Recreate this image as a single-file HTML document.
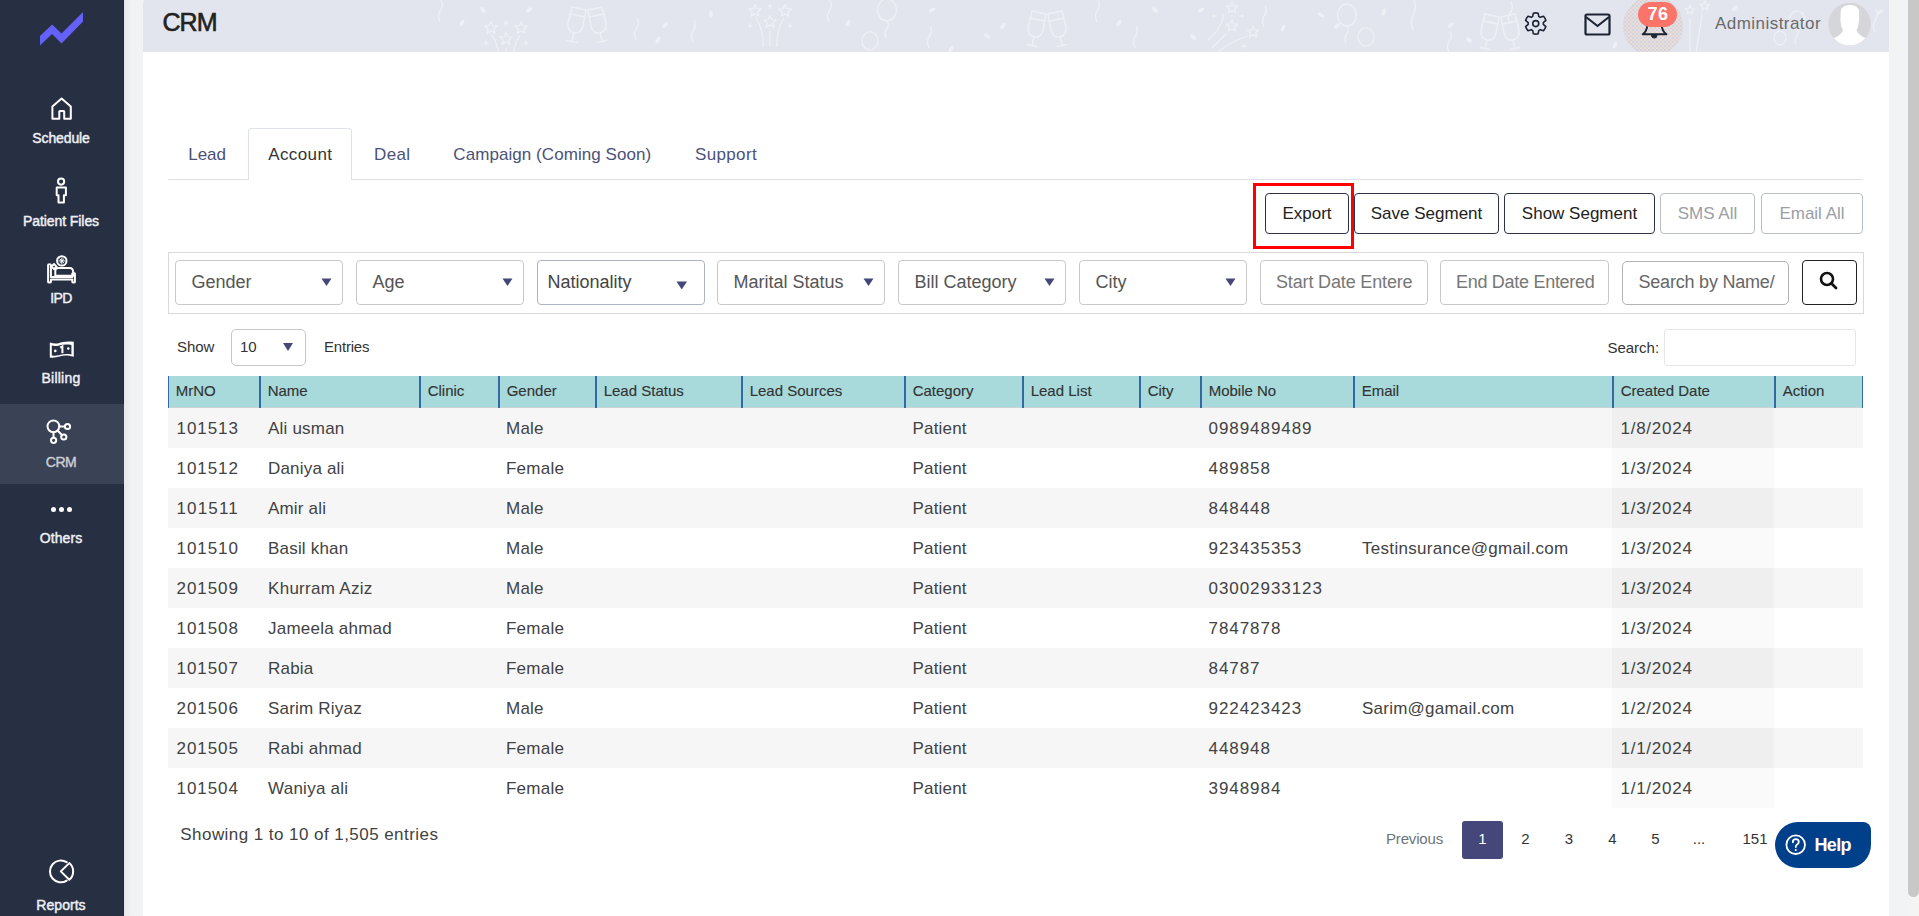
<!DOCTYPE html>
<html><head><meta charset="utf-8"><title>CRM</title>
<style>
html,body{margin:0;padding:0;}
body{width:1919px;height:916px;overflow:hidden;position:relative;background:#f1f2f4;font-family:"Liberation Sans",sans-serif;}
div,span,svg{position:absolute;box-sizing:border-box;}
.t{white-space:nowrap;}
</style></head><body>
<div style="left:0px;top:0px;width:124px;height:916px;background:#272f43;"></div>
<div style="left:123px;top:0px;width:1px;height:916px;background:#1f2638;"></div>
<div style="left:124px;top:0px;width:19px;height:916px;background:linear-gradient(90deg,#e6e7ea,#f1f2f4 40%,#f2f3f5);"></div>
<div style="left:143px;top:0px;width:1746px;height:916px;background:#fff;border-top-left-radius:9px;"></div>
<div style="left:143px;top:40px;width:1746px;height:876px;background:#fff;"></div>
<div style="left:143px;top:-5px;width:1746px;height:57px;background:#e2e5ee;border-top-left-radius:9px;"></div>
<div style="left:1889px;top:0px;width:19px;height:916px;background:#f2f3f5;"></div>
<div style="left:1908px;top:0px;width:11px;height:916px;background:#f4f4f4;"></div>
<div style="left:1908px;top:0px;width:11px;height:897px;background:#c8c8c8;border-radius:0 0 6px 6px;"></div>
<div style="left:0px;top:404px;width:124px;height:80px;background:#3a4256;"></div>
<svg style="left:0;top:0" width="124" height="60"><polygon points="40,36 52.1,24.6 61.5,33.4 83,12.1 83,21.6 61.5,43.5 52.1,34 40,45.5" fill="#6461f8"/></svg>
<span class="t" style="left:32.30px;top:130.10px;font-size:14px;line-height:16.10px;color:#eef0f3;font-weight:400;letter-spacing:-0.120px;-webkit-text-stroke:0.45px #eef0f3">Schedule</span>
<span class="t" style="left:23.00px;top:213.10px;font-size:14px;line-height:16.10px;color:#eef0f3;font-weight:400;letter-spacing:-0.078px;-webkit-text-stroke:0.45px #eef0f3">Patient Files</span>
<span class="t" style="left:50.20px;top:290.10px;font-size:14px;line-height:16.10px;color:#eef0f3;font-weight:400;letter-spacing:-0.581px;-webkit-text-stroke:0.45px #eef0f3">IPD</span>
<span class="t" style="left:41.50px;top:370.10px;font-size:14px;line-height:16.10px;color:#eef0f3;font-weight:400;letter-spacing:0.237px;-webkit-text-stroke:0.45px #eef0f3">Billing</span>
<span class="t" style="left:45.85px;top:454.10px;font-size:14px;line-height:16.10px;color:#c9ccd3;font-weight:400;letter-spacing:-0.525px;-webkit-text-stroke:0.45px #c9ccd3">CRM</span>
<span class="t" style="left:39.75px;top:530.40px;font-size:14px;line-height:16.10px;color:#eef0f3;font-weight:400;letter-spacing:0.083px;-webkit-text-stroke:0.45px #eef0f3">Others</span>
<span class="t" style="left:36.35px;top:896.60px;font-size:14px;line-height:16.10px;color:#eef0f3;font-weight:400;letter-spacing:0.043px;-webkit-text-stroke:0.45px #eef0f3">Reports</span>
<svg style="left:44px;top:92px" width="36" height="34"><path d="M8.4 26.8 V14.6 L17.6 6.6 L26.8 14.6 V26.8 H20.2 V19.6 Q20.2 19 19.6 19 H15.9 Q15.3 19 15.3 19.6 V26.8 Z" fill="none" stroke="#fff" stroke-width="2" stroke-linejoin="round" stroke-linecap="round" stroke-width="2"/></svg>
<svg style="left:44px;top:172px" width="36" height="36"><circle cx="17.1" cy="9.6" r="3.1" fill="none" stroke="#fff" stroke-width="2" stroke-linejoin="round" stroke-linecap="round" stroke-width="1.8"/><path d="M12.7 15.4 H21.9 V23.2 H19.9 V30.5 H14.5 V23.2 H12.7 Z" fill="none" stroke="#fff" stroke-width="2" stroke-linejoin="round" stroke-linecap="round" stroke-width="1.8"/></svg>
<svg style="left:40px;top:250px" width="44" height="40"><g fill="none" stroke="#fff" stroke-width="2" stroke-linejoin="round" stroke-linecap="round" stroke-width="1.3"><path d="M8.1 15 Q8.1 14.2 9.5 14.2 Q10.9 14.2 10.9 15 V27 H32.3 V23.6 Q32.3 23 33.6 23 Q34.9 23 34.9 23.6 V32 Q34.9 32.6 33.6 32.6 Q32.3 32.6 32.3 32 V29.4 H10.9 V32 Q10.9 32.6 9.5 32.6 Q8.1 32.6 8.1 32 Z"/><path d="M15.3 25.8 V20.8 Q15.3 17.9 18.2 17.9 H29.6 Q33.2 17.9 33.2 22.2 V25.8 Z"/><rect x="12.2" y="14.8" width="3.6" height="3.6" transform="rotate(45 14 16.6)"/><circle cx="21.8" cy="10.9" r="4.7"/><path d="M21.8 8.2 V13.6 M19.1 10.9 H24.5 M19.9 9 L23.7 12.8 M23.7 9 L19.9 12.8" stroke-width="1"/></g></svg>
<svg style="left:40px;top:332px" width="44" height="36"><path d="M9.8 10.6 C13 11.4 15.5 12 18.5 11.2 C22.5 10 26 9 33.8 9.8 V24.8 C28.5 23.4 24.5 23 20.5 24.2 C16.5 25.4 13 26 9.8 25.5 Z" fill="#fff"/><path d="M11.8 13.6 C14 14.3 16.5 14.2 19.2 13.4 C23 12.4 27 12.2 31.4 12.9 V22.4 C27.5 21.8 24 21.9 20.5 22.7 C17 23.6 14 23.8 11.8 23.6 Z" fill="#272f43"/><circle cx="15.3" cy="18.9" r="1.3" fill="#fff"/><circle cx="28.3" cy="16.5" r="1.3" fill="#fff"/><path d="M20.2 15.6 L22.4 14.4 V21.2" fill="none" stroke="#fff" stroke-width="2"/></svg>
<svg style="left:40px;top:412px" width="40" height="36"><g fill="none" stroke="#fff" stroke-width="2" stroke-linejoin="round" stroke-linecap="round" stroke-width="1.5"><circle cx="13.4" cy="14.3" r="5.9"/><circle cx="27.5" cy="14.5" r="2.6"/><circle cx="23.8" cy="25" r="2.6"/><circle cx="13.6" cy="28.3" r="2.6"/><path d="M19.3 14.4 H24.9 M17.6 18.5 L21.9 23 M13.5 20.2 V25.7"/></g></svg>
<svg style="left:48px;top:505px" width="28" height="10"><circle cx="5.5" cy="4.5" r="2.5" fill="#fff"/><circle cx="13.5" cy="4.5" r="2.5" fill="#fff"/><circle cx="21.5" cy="4.5" r="2.5" fill="#fff"/></svg>
<svg style="left:44px;top:850px" width="36" height="40"><g fill="none" stroke="#fff" stroke-width="2" stroke-linejoin="round" stroke-linecap="round" stroke-width="1.5"><path d="M22.7 12.2 A10.9 10.9 0 1 0 22.7 30.6"/><path d="M16.8 21.4 L25.3 13.1 A10.9 10.9 0 0 1 25.3 29.7 Z"/></g></svg>
<svg style="left:0;top:0" width="1889" height="52"><g transform="translate(566,5) scale(1.0)" fill="none" stroke="#eef0f5" stroke-width="1.4" stroke-linecap="round" stroke-linejoin="round"><path d="M6 2 L20 5 L17 21 Q15 29 8 28 Q1 26 2 18 Z"/><path d="M4 9 L19 12"/><path d="M8 28 L6 36 M1 35.5 L11 37.5"/><path d="M22 5 L36 2 L40 18 Q41 26 34 28 Q27 29 25 21 Z"/><path d="M23 12 L38 9"/><path d="M34 28 L36 36 M31 37.5 L41 35.5"/></g><g transform="translate(1026,9) scale(1.0)" fill="none" stroke="#eef0f5" stroke-width="1.4" stroke-linecap="round" stroke-linejoin="round"><path d="M6 2 L20 5 L17 21 Q15 29 8 28 Q1 26 2 18 Z"/><path d="M4 9 L19 12"/><path d="M8 28 L6 36 M1 35.5 L11 37.5"/><path d="M22 5 L36 2 L40 18 Q41 26 34 28 Q27 29 25 21 Z"/><path d="M23 12 L38 9"/><path d="M34 28 L36 36 M31 37.5 L41 35.5"/></g><g transform="translate(1479,12) scale(1.0)" fill="none" stroke="#eef0f5" stroke-width="1.4" stroke-linecap="round" stroke-linejoin="round"><path d="M6 2 L20 5 L17 21 Q15 29 8 28 Q1 26 2 18 Z"/><path d="M4 9 L19 12"/><path d="M8 28 L6 36 M1 35.5 L11 37.5"/><path d="M22 5 L36 2 L40 18 Q41 26 34 28 Q27 29 25 21 Z"/><path d="M23 12 L38 9"/><path d="M34 28 L36 36 M31 37.5 L41 35.5"/></g><polygon points="491.0,21.5 492.7,25.6 497.2,26.0 493.8,28.9 494.8,33.3 491.0,30.9 487.2,33.3 488.2,28.9 484.8,26.0 489.3,25.6" fill="none" stroke="#eef0f5" stroke-width="1.3" stroke-linejoin="round"/><polygon points="521.0,21.5 522.7,25.6 527.2,26.0 523.8,28.9 524.8,33.3 521.0,30.9 517.2,33.3 518.2,28.9 514.8,26.0 519.3,25.6" fill="none" stroke="#eef0f5" stroke-width="1.3" stroke-linejoin="round"/><polygon points="506.0,32.5 507.7,36.6 512.2,37.0 508.8,39.9 509.8,44.3 506.0,41.9 502.2,44.3 503.2,39.9 499.8,37.0 504.3,36.6" fill="none" stroke="#eef0f5" stroke-width="1.3" stroke-linejoin="round"/><path d="M503.5 23 H508.5 M506 20.5 V25.5" stroke="#eef0f5" stroke-width="1.3"/><path d="M483.5 43 H488.5 M486 40.5 V45.5" stroke="#eef0f5" stroke-width="1.3"/><path d="M523.5 43 H528.5 M526 40.5 V45.5" stroke="#eef0f5" stroke-width="1.3"/><path d="M506 48 V64 M492 35 Q500 48 499 64 M520 35 Q512 48 513 64" fill="none" stroke="#eef0f5" stroke-width="1.3"/><polygon points="755.0,4.5 756.7,8.6 761.2,9.0 757.8,11.9 758.8,16.3 755.0,13.9 751.2,16.3 752.2,11.9 748.8,9.0 753.3,8.6" fill="none" stroke="#eef0f5" stroke-width="1.3" stroke-linejoin="round"/><polygon points="785.0,4.5 786.7,8.6 791.2,9.0 787.8,11.9 788.8,16.3 785.0,13.9 781.2,16.3 782.2,11.9 778.8,9.0 783.3,8.6" fill="none" stroke="#eef0f5" stroke-width="1.3" stroke-linejoin="round"/><polygon points="770.0,15.5 771.7,19.6 776.2,20.0 772.8,22.9 773.8,27.3 770.0,24.9 766.2,27.3 767.2,22.9 763.8,20.0 768.3,19.6" fill="none" stroke="#eef0f5" stroke-width="1.3" stroke-linejoin="round"/><path d="M767.5 6 H772.5 M770 3.5 V8.5" stroke="#eef0f5" stroke-width="1.3"/><path d="M747.5 26 H752.5 M750 23.5 V28.5" stroke="#eef0f5" stroke-width="1.3"/><path d="M787.5 26 H792.5 M790 23.5 V28.5" stroke="#eef0f5" stroke-width="1.3"/><path d="M770 31 V47 M756 18 Q764 31 763 47 M784 18 Q776 31 777 47" fill="none" stroke="#eef0f5" stroke-width="1.3"/><polygon points="1232.0,2.0 1233.6,5.8 1237.7,6.1 1234.6,8.8 1235.5,12.9 1232.0,10.7 1228.5,12.9 1229.4,8.8 1226.3,6.1 1230.4,5.8" fill="none" stroke="#eef0f5" stroke-width="1.3" stroke-linejoin="round"/><polygon points="1232.0,20.0 1233.6,23.8 1237.7,24.1 1234.6,26.8 1235.5,30.9 1232.0,28.7 1228.5,30.9 1229.4,26.8 1226.3,24.1 1230.4,23.8" fill="none" stroke="#eef0f5" stroke-width="1.3" stroke-linejoin="round"/><polygon points="1253.0,26.0 1254.6,29.8 1258.7,30.1 1255.6,32.8 1256.5,36.9 1253.0,34.7 1249.5,36.9 1250.4,32.8 1247.3,30.1 1251.4,29.8" fill="none" stroke="#eef0f5" stroke-width="1.3" stroke-linejoin="round"/><path d="M1211.5 16 H1216.5 M1214 13.5 V18.5" stroke="#eef0f5" stroke-width="1.3"/><path d="M1239.5 16 H1244.5 M1242 13.5 V18.5" stroke="#eef0f5" stroke-width="1.3"/><path d="M1241.5 46 H1246.5 M1244 43.5 V48.5" stroke="#eef0f5" stroke-width="1.3"/><path d="M1224 14 Q1222 28 1208 40 M1226 34 L1212 48 M1248 36 Q1230 42 1218 52" fill="none" stroke="#eef0f5" stroke-width="1.3"/><polygon points="1690.0,5.0 1691.3,8.2 1694.8,8.5 1692.1,10.7 1692.9,14.0 1690.0,12.2 1687.1,14.0 1687.9,10.7 1685.2,8.5 1688.7,8.2" fill="none" stroke="#eef0f5" stroke-width="1.3" stroke-linejoin="round"/><polygon points="1705.0,1.0 1706.3,4.2 1709.8,4.5 1707.1,6.7 1707.9,10.0 1705.0,8.2 1702.1,10.0 1702.9,6.7 1700.2,4.5 1703.7,4.2" fill="none" stroke="#eef0f5" stroke-width="1.3" stroke-linejoin="round"/><path d="M1690 18 V52 M1702 14 Q1700 30 1696 52" fill="none" stroke="#eef0f5" stroke-width="1.3"/><ellipse cx="887" cy="10" rx="9.5" ry="10.924999999999999" fill="none" stroke="#eef0f5" stroke-width="1.3"/><path d="M887 20.924999999999997 Q890 25.200000000000003 886 29.95 Q884 33.75 886 38.5" fill="none" stroke="#eef0f5" stroke-width="1.3"/><ellipse cx="870" cy="41" rx="8" ry="9.2" fill="none" stroke="#eef0f5" stroke-width="1.3"/><ellipse cx="1347" cy="15" rx="9.5" ry="10.924999999999999" fill="none" stroke="#eef0f5" stroke-width="1.3"/><path d="M1347 25.924999999999997 Q1350 30.200000000000003 1346 34.95 Q1344 38.75 1346 43.5" fill="none" stroke="#eef0f5" stroke-width="1.3"/><ellipse cx="1366" cy="37" rx="8" ry="9.2" fill="none" stroke="#eef0f5" stroke-width="1.3"/><ellipse cx="1797" cy="20" rx="8" ry="9.2" fill="none" stroke="#eef0f5" stroke-width="1.3"/><path d="M1797 29.2 Q1800 32.8 1796 36.8 Q1794 40.0 1796 44" fill="none" stroke="#eef0f5" stroke-width="1.3"/><ellipse cx="1780" cy="38" rx="6" ry="6.8999999999999995" fill="none" stroke="#eef0f5" stroke-width="1.3"/><path d="M441 0 Q444 5.5 440 11.0 Q437 16.5 440 22" fill="none" stroke="#eef0f5" stroke-width="1.3"/><path d="M637 18 Q640 23.5 636 29.0 Q633 34.5 636 40" fill="none" stroke="#eef0f5" stroke-width="1.3"/><path d="M694 20 Q697 25.5 693 31.0 Q690 36.5 693 42" fill="none" stroke="#eef0f5" stroke-width="1.3"/><path d="M830 0 Q833 5.5 829 11.0 Q826 16.5 829 22" fill="none" stroke="#eef0f5" stroke-width="1.3"/><path d="M930 26 Q933 31.5 929 37.0 Q926 42.5 929 48" fill="none" stroke="#eef0f5" stroke-width="1.3"/><path d="M1098 0 Q1101 5.5 1097 11.0 Q1094 16.5 1097 22" fill="none" stroke="#eef0f5" stroke-width="1.3"/><path d="M1136 26 Q1139 31.5 1135 37.0 Q1132 42.5 1135 48" fill="none" stroke="#eef0f5" stroke-width="1.3"/><path d="M1265 5 Q1268 10.5 1264 16.0 Q1261 21.5 1264 27" fill="none" stroke="#eef0f5" stroke-width="1.3"/><path d="M1414 0 Q1417 7.5 1413 15.0 Q1410 22.5 1413 30" fill="none" stroke="#eef0f5" stroke-width="1.3"/><path d="M1450 31 Q1453 36.25 1449 41.5 Q1446 46.75 1449 52" fill="none" stroke="#eef0f5" stroke-width="1.3"/><path d="M1511 2 Q1514 7.5 1510 13.0 Q1507 18.5 1510 24" fill="none" stroke="#eef0f5" stroke-width="1.3"/><path d="M1876 10 Q1879 15.5 1875 21.0 Q1872 26.5 1875 32" fill="none" stroke="#eef0f5" stroke-width="1.3"/><ellipse cx="462" cy="23" rx="1.8" ry="3.6" transform="rotate(30 462 23)" fill="#eef0f5"/><ellipse cx="483" cy="10" rx="1.8" ry="3.6" transform="rotate(-40 483 10)" fill="#eef0f5"/><ellipse cx="529" cy="10" rx="1.8" ry="3.6" transform="rotate(50 529 10)" fill="#eef0f5"/><ellipse cx="665" cy="25" rx="1.8" ry="3.6" transform="rotate(40 665 25)" fill="#eef0f5"/><ellipse cx="658" cy="40" rx="1.8" ry="3.6" transform="rotate(30 658 40)" fill="#eef0f5"/><ellipse cx="711" cy="14" rx="1.8" ry="3.6" transform="rotate(0 711 14)" fill="#eef0f5"/><ellipse cx="848" cy="23" rx="1.8" ry="3.6" transform="rotate(30 848 23)" fill="#eef0f5"/><ellipse cx="932" cy="10" rx="1.8" ry="3.6" transform="rotate(60 932 10)" fill="#eef0f5"/><ellipse cx="987" cy="36" rx="1.8" ry="3.6" transform="rotate(-50 987 36)" fill="#eef0f5"/><ellipse cx="951" cy="49" rx="1.8" ry="3.6" transform="rotate(30 951 49)" fill="#eef0f5"/><ellipse cx="1003" cy="26" rx="1.8" ry="3.6" transform="rotate(40 1003 26)" fill="#eef0f5"/><ellipse cx="1119" cy="23" rx="1.8" ry="3.6" transform="rotate(30 1119 23)" fill="#eef0f5"/><ellipse cx="1155" cy="10" rx="1.8" ry="3.6" transform="rotate(-50 1155 10)" fill="#eef0f5"/><ellipse cx="1201" cy="10" rx="1.8" ry="3.6" transform="rotate(60 1201 10)" fill="#eef0f5"/><ellipse cx="1193" cy="37" rx="1.8" ry="3.6" transform="rotate(-50 1193 37)" fill="#eef0f5"/><ellipse cx="1283" cy="28" rx="1.8" ry="3.6" transform="rotate(20 1283 28)" fill="#eef0f5"/><ellipse cx="1321" cy="15" rx="1.8" ry="3.6" transform="rotate(-60 1321 15)" fill="#eef0f5"/><ellipse cx="1337" cy="26" rx="1.8" ry="3.6" transform="rotate(45 1337 26)" fill="#eef0f5"/><ellipse cx="1384" cy="12" rx="1.8" ry="3.6" transform="rotate(10 1384 12)" fill="#eef0f5"/><ellipse cx="1451" cy="25" rx="1.8" ry="3.6" transform="rotate(50 1451 25)" fill="#eef0f5"/><ellipse cx="1469" cy="40" rx="1.8" ry="3.6" transform="rotate(-50 1469 40)" fill="#eef0f5"/><ellipse cx="1585" cy="18" rx="1.8" ry="3.6" transform="rotate(30 1585 18)" fill="#eef0f5"/><ellipse cx="1615" cy="45" rx="1.8" ry="3.6" transform="rotate(30 1615 45)" fill="#eef0f5"/><ellipse cx="1735" cy="8" rx="1.8" ry="3.6" transform="rotate(40 1735 8)" fill="#eef0f5"/><ellipse cx="1880" cy="12" rx="1.8" ry="3.6" transform="rotate(60 1880 12)" fill="#eef0f5"/></svg>
<span class="t" style="left:162.50px;top:7.96px;font-size:25px;line-height:28.75px;color:#222;font-weight:400;letter-spacing:-0.974px;-webkit-text-stroke:0.6px #222;">CRM</span>
<svg style="left:1520px;top:8px" width="32" height="32"><path d="M12.66 8.56 L13.37 5.17 A10.6 10.6 0 0 1 18.13 5.17 L18.84 8.56 A7.6 7.6 0 0 1 20.22 9.35 L23.50 8.27 A10.6 10.6 0 0 1 25.89 12.40 L23.31 14.71 A7.6 7.6 0 0 1 23.31 16.29 L25.89 18.60 A10.6 10.6 0 0 1 23.50 22.73 L20.22 21.65 A7.6 7.6 0 0 1 18.84 22.44 L18.13 25.83 A10.6 10.6 0 0 1 13.37 25.83 L12.66 22.44 A7.6 7.6 0 0 1 11.28 21.65 L8.00 22.73 A10.6 10.6 0 0 1 5.61 18.60 L8.19 16.29 A7.6 7.6 0 0 1 8.19 14.71 L5.61 12.40 A10.6 10.6 0 0 1 8.00 8.27 L11.28 9.35 A7.6 7.6 0 0 1 12.66 8.56 Z" fill="none" stroke="#1c2434" stroke-width="1.6" stroke-linejoin="round"/><circle cx="15.75" cy="15.6" r="3" fill="none" stroke="#1c2434" stroke-width="1.6"/></svg>
<svg style="left:1583px;top:12px" width="30" height="26"><rect x="2.5" y="2.5" width="24" height="20" rx="1.5" fill="none" stroke="#1c2434" stroke-width="2.2"/><path d="M3 5 L14.5 14 L26 5" fill="none" stroke="#1c2434" stroke-width="2.2" stroke-linejoin="round"/></svg>
<div style="left:1618px;top:0;width:72px;height:52px;overflow:hidden;"><div style="left:5px;top:-4px;width:60px;height:60px;border-radius:50%;background:radial-gradient(circle,rgba(150,150,165,.35) 0.5px,transparent 0.9px) 0 0/4px 4px,radial-gradient(circle,rgba(225,160,100,.4) 0.5px,transparent 0.9px) 2px 2px/4px 4px,#e2dfe5;"></div></div>
<svg style="left:1620px;top:0" width="70" height="52"><path d="M27.3 25 Q27 31 22.8 34.3 H46.4 Q42 31 41.7 25" fill="none" stroke="#1c2434" stroke-width="2" stroke-linejoin="round"/><path d="M31.5 35.3 A2.75 2.75 0 0 0 37 35.3 Z" fill="#1c2434" stroke="#1c2434" stroke-width="1"/></svg>
<div style="left:1638px;top:2px;width:39px;height:25px;background:#fa7469;border-radius:13px;"></div>
<span class="t" style="left:1647.50px;top:3.51px;font-size:18px;line-height:20.70px;color:#fff;font-weight:700;letter-spacing:0.484px;">76</span>
<span class="t" style="left:1715.00px;top:13.83px;font-size:17px;line-height:19.55px;color:#6a6a6a;font-weight:400;letter-spacing:0.452px;">Administrator</span>
<svg style="left:1828px;top:3px" width="44" height="44"><defs><clipPath id="av"><circle cx="21.6" cy="21" r="21.3"/></clipPath></defs><circle cx="21.6" cy="21" r="21.3" fill="#d6d6da"/><g clip-path="url(#av)" fill="#fff"><path d="M13.2 6 Q16 1.5 24 2 Q29 3 30.8 6.5 Q31.5 13 30.8 19 Q30.5 24 28.4 27.5 Q31 32.5 38.5 35.5 L46 46 H-2 L5 35.5 Q12.5 32.5 15.2 27.5 Q13 24 12.6 19 Q12 12 13.2 6 Z"/></g></svg>
<div style="left:168px;top:179px;width:1695px;height:1px;background:#dee2e6;"></div>
<div style="left:248px;top:128px;width:104px;height:52px;background:#fff;border:1px solid #dee2e6;border-bottom:none;border-radius:4px 4px 0 0;"></div>
<span class="t" style="left:188.30px;top:145.03px;font-size:17px;line-height:19.55px;color:#4b5278;font-weight:400;letter-spacing:-0.078px;">Lead</span>
<span class="t" style="left:268.30px;top:145.03px;font-size:17px;line-height:19.55px;color:#333;font-weight:400;letter-spacing:0.368px;">Account</span>
<span class="t" style="left:374.00px;top:145.03px;font-size:17px;line-height:19.55px;color:#4b5278;font-weight:400;letter-spacing:0.383px;">Deal</span>
<span class="t" style="left:453.30px;top:145.03px;font-size:17px;line-height:19.55px;color:#4b5278;font-weight:400;letter-spacing:0.067px;">Campaign (Coming Soon)</span>
<span class="t" style="left:695.00px;top:145.03px;font-size:17px;line-height:19.55px;color:#4b5278;font-weight:400;letter-spacing:0.353px;">Support</span>
<div style="left:1265px;top:193px;width:84px;height:41px;border:1px solid #2b3447;border-radius:4px;background:#fff;"></div>
<span class="t" style="left:1282.44px;top:203.63px;font-size:17px;line-height:19.55px;color:#222;font-weight:400;letter-spacing:0.000px;">Export</span>
<div style="left:1354px;top:193px;width:145px;height:41px;border:1px solid #2b3447;border-radius:4px;background:#fff;"></div>
<span class="t" style="left:1370.75px;top:203.63px;font-size:17px;line-height:19.55px;color:#222;font-weight:400;letter-spacing:0.000px;">Save Segment</span>
<div style="left:1504px;top:193px;width:151px;height:41px;border:1px solid #2b3447;border-radius:4px;background:#fff;"></div>
<span class="t" style="left:1521.86px;top:203.63px;font-size:17px;line-height:19.55px;color:#222;font-weight:400;letter-spacing:0.000px;">Show Segment</span>
<div style="left:1660px;top:193px;width:95px;height:41px;border:1px solid #b9bdc4;border-radius:4px;background:#fff;"></div>
<span class="t" style="left:1677.73px;top:203.63px;font-size:17px;line-height:19.55px;color:#9a9ea6;font-weight:400;letter-spacing:0.000px;">SMS All</span>
<div style="left:1761px;top:193px;width:102px;height:41px;border:1px solid #b9bdc4;border-radius:4px;background:#fff;"></div>
<span class="t" style="left:1779.40px;top:203.63px;font-size:17px;line-height:19.55px;color:#9a9ea6;font-weight:400;letter-spacing:0.000px;">Email All</span>
<div style="left:1253px;top:183px;width:101px;height:66px;border:3px solid #fe0000;"></div>
<div style="left:168px;top:252px;width:1696px;height:62px;border:1px solid #d9d9d9;"></div>
<div style="left:175px;top:260px;width:168px;height:45px;border:1px solid #c9c9c9;border-radius:4px;background:#fff;"></div>
<span class="t" style="left:191.50px;top:272.01px;font-size:18px;line-height:20.70px;color:#555;font-weight:400;letter-spacing:0.000px;">Gender</span>
<svg style="left:321px;top:278px" width="11" height="9"><path d="M0.5 0.5 H10.5 L5.5 8 Z" fill="#45467a"/></svg>
<div style="left:356px;top:260px;width:168px;height:45px;border:1px solid #c9c9c9;border-radius:4px;background:#fff;"></div>
<span class="t" style="left:372.50px;top:272.01px;font-size:18px;line-height:20.70px;color:#555;font-weight:400;letter-spacing:0.000px;">Age</span>
<svg style="left:502px;top:278px" width="11" height="9"><path d="M0.5 0.5 H10.5 L5.5 8 Z" fill="#45467a"/></svg>
<div style="left:537px;top:260px;width:168px;height:45px;border:1px solid #aeb4c4;border-radius:4px;background:#fff;"></div>
<span class="t" style="left:547.50px;top:272.01px;font-size:18px;line-height:20.70px;color:#444;font-weight:400;letter-spacing:0.000px;">Nationality</span>
<svg style="left:676px;top:281px" width="12" height="9"><path d="M0.5 0.5 H11 L5.75 8.5 Z" fill="#45467a"/></svg>
<div style="left:717px;top:260px;width:168px;height:45px;border:1px solid #c9c9c9;border-radius:4px;background:#fff;"></div>
<span class="t" style="left:733.50px;top:272.01px;font-size:18px;line-height:20.70px;color:#555;font-weight:400;letter-spacing:0.000px;">Marital Status</span>
<svg style="left:863px;top:278px" width="11" height="9"><path d="M0.5 0.5 H10.5 L5.5 8 Z" fill="#45467a"/></svg>
<div style="left:898px;top:260px;width:168px;height:45px;border:1px solid #c9c9c9;border-radius:4px;background:#fff;"></div>
<span class="t" style="left:914.50px;top:272.01px;font-size:18px;line-height:20.70px;color:#555;font-weight:400;letter-spacing:0.000px;">Bill Category</span>
<svg style="left:1044px;top:278px" width="11" height="9"><path d="M0.5 0.5 H10.5 L5.5 8 Z" fill="#45467a"/></svg>
<div style="left:1079px;top:260px;width:168px;height:45px;border:1px solid #c9c9c9;border-radius:4px;background:#fff;"></div>
<span class="t" style="left:1095.50px;top:272.01px;font-size:18px;line-height:20.70px;color:#555;font-weight:400;letter-spacing:0.000px;">City</span>
<svg style="left:1225px;top:278px" width="11" height="9"><path d="M0.5 0.5 H10.5 L5.5 8 Z" fill="#45467a"/></svg>
<div style="left:1260px;top:260px;width:168px;height:45px;border:1px solid #c9c9c9;border-radius:4px;background:#fff;"></div>
<span class="t" style="left:1276.00px;top:272.01px;font-size:18px;line-height:20.70px;color:#777;font-weight:400;letter-spacing:-0.153px;">Start Date Entere</span>
<div style="left:1440px;top:260px;width:169px;height:45px;border:1px solid #c9c9c9;border-radius:4px;background:#fff;"></div>
<span class="t" style="left:1456.00px;top:272.01px;font-size:18px;line-height:20.70px;color:#777;font-weight:400;letter-spacing:-0.289px;">End Date Entered</span>
<div style="left:1622px;top:261px;width:167px;height:44px;border:1px solid #b3b3b3;border-radius:5px;background:#fff;"></div>
<span class="t" style="left:1638.50px;top:272.41px;font-size:18px;line-height:20.70px;color:#666;font-weight:400;letter-spacing:-0.206px;">Search by Name/</span>
<div style="left:1802px;top:260px;width:55px;height:45px;border:1px solid #222;border-radius:4px;background:#fff;"></div>
<svg style="left:1819px;top:271px" width="20" height="20"><circle cx="8" cy="8" r="6" fill="none" stroke="#111" stroke-width="2.6"/><path d="M12.5 12.5 L17 17" stroke="#111" stroke-width="2.8" stroke-linecap="round"/></svg>
<span class="t" style="left:177.00px;top:338.28px;font-size:15px;line-height:17.25px;color:#333;font-weight:400;letter-spacing:-0.054px;">Show</span>
<div style="left:231px;top:329px;width:75px;height:37px;border:1px solid #c6c6c6;border-radius:5px;background:#fff;"></div>
<span class="t" style="left:240.00px;top:338.28px;font-size:15px;line-height:17.25px;color:#333;font-weight:400;letter-spacing:0.000px;">10</span>
<svg style="left:283px;top:343px" width="11" height="9"><path d="M0 0 H10 L5 8 Z" fill="#45467a"/></svg>
<span class="t" style="left:324.00px;top:338.28px;font-size:15px;line-height:17.25px;color:#333;font-weight:400;letter-spacing:-0.212px;">Entries</span>
<span class="t" style="left:1607.40px;top:338.68px;font-size:15px;line-height:17.25px;color:#333;font-weight:400;letter-spacing:0.000px;">Search:</span>
<div style="left:1664px;top:329px;width:192px;height:37px;border:1px solid #e6e6e6;border-radius:3px;background:#fff;"></div>
<div style="left:168px;top:376px;width:1695px;height:32px;background:#a8dadc;"></div>
<div style="left:168px;top:407px;width:1695px;height:2px;background:#c9d3d4;"></div>
<div style="left:168px;top:376px;width:1px;height:32px;background:#3569a5;"></div>
<div style="left:259px;top:376px;width:2px;height:32px;background:#3569a5;"></div>
<div style="left:419px;top:376px;width:2px;height:32px;background:#3569a5;"></div>
<div style="left:498px;top:376px;width:2px;height:32px;background:#3569a5;"></div>
<div style="left:595px;top:376px;width:2px;height:32px;background:#3569a5;"></div>
<div style="left:741px;top:376px;width:2px;height:32px;background:#3569a5;"></div>
<div style="left:904px;top:376px;width:2px;height:32px;background:#3569a5;"></div>
<div style="left:1022px;top:376px;width:2px;height:32px;background:#3569a5;"></div>
<div style="left:1139px;top:376px;width:2px;height:32px;background:#3569a5;"></div>
<div style="left:1200px;top:376px;width:2px;height:32px;background:#3569a5;"></div>
<div style="left:1353px;top:376px;width:2px;height:32px;background:#3569a5;"></div>
<div style="left:1612px;top:376px;width:2px;height:32px;background:#3569a5;"></div>
<div style="left:1774px;top:376px;width:2px;height:32px;background:#3569a5;"></div>
<div style="left:1862px;top:376px;width:1px;height:32px;background:#3569a5;"></div>
<span class="t" style="left:175.70px;top:382.18px;font-size:15px;line-height:17.25px;color:#333;font-weight:400;letter-spacing:0.000px;-webkit-text-stroke:0.15px #333;">MrNO</span>
<span class="t" style="left:267.70px;top:382.18px;font-size:15px;line-height:17.25px;color:#333;font-weight:400;letter-spacing:0.000px;-webkit-text-stroke:0.15px #333;">Name</span>
<span class="t" style="left:427.70px;top:382.18px;font-size:15px;line-height:17.25px;color:#333;font-weight:400;letter-spacing:0.000px;-webkit-text-stroke:0.15px #333;">Clinic</span>
<span class="t" style="left:506.70px;top:382.18px;font-size:15px;line-height:17.25px;color:#333;font-weight:400;letter-spacing:0.000px;-webkit-text-stroke:0.15px #333;">Gender</span>
<span class="t" style="left:603.70px;top:382.18px;font-size:15px;line-height:17.25px;color:#333;font-weight:400;letter-spacing:0.000px;-webkit-text-stroke:0.15px #333;">Lead Status</span>
<span class="t" style="left:749.70px;top:382.18px;font-size:15px;line-height:17.25px;color:#333;font-weight:400;letter-spacing:0.000px;-webkit-text-stroke:0.15px #333;">Lead Sources</span>
<span class="t" style="left:912.70px;top:382.18px;font-size:15px;line-height:17.25px;color:#333;font-weight:400;letter-spacing:0.000px;-webkit-text-stroke:0.15px #333;">Category</span>
<span class="t" style="left:1030.70px;top:382.18px;font-size:15px;line-height:17.25px;color:#333;font-weight:400;letter-spacing:0.000px;-webkit-text-stroke:0.15px #333;">Lead List</span>
<span class="t" style="left:1147.70px;top:382.18px;font-size:15px;line-height:17.25px;color:#333;font-weight:400;letter-spacing:0.000px;-webkit-text-stroke:0.15px #333;">City</span>
<span class="t" style="left:1208.70px;top:382.18px;font-size:15px;line-height:17.25px;color:#333;font-weight:400;letter-spacing:0.000px;-webkit-text-stroke:0.15px #333;">Mobile No</span>
<span class="t" style="left:1361.70px;top:382.18px;font-size:15px;line-height:17.25px;color:#333;font-weight:400;letter-spacing:0.000px;-webkit-text-stroke:0.15px #333;">Email</span>
<span class="t" style="left:1620.70px;top:382.18px;font-size:15px;line-height:17.25px;color:#333;font-weight:400;letter-spacing:0.000px;-webkit-text-stroke:0.15px #333;">Created Date</span>
<span class="t" style="left:1782.70px;top:382.18px;font-size:15px;line-height:17.25px;color:#333;font-weight:400;letter-spacing:0.000px;-webkit-text-stroke:0.15px #333;">Action</span>
<div style="left:168px;top:408px;width:1695px;height:40px;background:#f6f6f6;"></div>
<div style="left:1612px;top:408px;width:162px;height:40px;background:#efefef;"></div>
<span class="t" style="left:176.50px;top:418.63px;font-size:17px;line-height:19.55px;color:#424242;font-weight:400;letter-spacing:0.945px;">101513</span>
<span class="t" style="left:268.00px;top:418.63px;font-size:17px;line-height:19.55px;color:#424242;font-weight:400;letter-spacing:0.207px;">Ali usman</span>
<span class="t" style="left:506.00px;top:418.63px;font-size:17px;line-height:19.55px;color:#424242;font-weight:400;letter-spacing:0.230px;">Male</span>
<span class="t" style="left:912.50px;top:418.63px;font-size:17px;line-height:19.55px;color:#424242;font-weight:400;letter-spacing:0.189px;">Patient</span>
<span class="t" style="left:1208.50px;top:418.63px;font-size:17px;line-height:19.55px;color:#424242;font-weight:400;letter-spacing:0.945px;">0989489489</span>
<span class="t" style="left:1620.50px;top:418.63px;font-size:17px;line-height:19.55px;color:#424242;font-weight:400;letter-spacing:0.738px;">1/8/2024</span>
<div style="left:1612px;top:448px;width:162px;height:40px;background:#fafafa;"></div>
<span class="t" style="left:176.50px;top:458.63px;font-size:17px;line-height:19.55px;color:#424242;font-weight:400;letter-spacing:0.945px;">101512</span>
<span class="t" style="left:268.00px;top:458.63px;font-size:17px;line-height:19.55px;color:#424242;font-weight:400;letter-spacing:0.187px;">Daniya ali</span>
<span class="t" style="left:506.00px;top:458.63px;font-size:17px;line-height:19.55px;color:#424242;font-weight:400;letter-spacing:0.236px;">Female</span>
<span class="t" style="left:912.50px;top:458.63px;font-size:17px;line-height:19.55px;color:#424242;font-weight:400;letter-spacing:0.189px;">Patient</span>
<span class="t" style="left:1208.50px;top:458.63px;font-size:17px;line-height:19.55px;color:#424242;font-weight:400;letter-spacing:0.945px;">489858</span>
<span class="t" style="left:1620.50px;top:458.63px;font-size:17px;line-height:19.55px;color:#424242;font-weight:400;letter-spacing:0.738px;">1/3/2024</span>
<div style="left:168px;top:488px;width:1695px;height:40px;background:#f6f6f6;"></div>
<div style="left:1612px;top:488px;width:162px;height:40px;background:#efefef;"></div>
<span class="t" style="left:176.50px;top:498.63px;font-size:17px;line-height:19.55px;color:#424242;font-weight:400;letter-spacing:1.156px;">101511</span>
<span class="t" style="left:268.00px;top:498.63px;font-size:17px;line-height:19.55px;color:#424242;font-weight:400;letter-spacing:0.177px;">Amir ali</span>
<span class="t" style="left:506.00px;top:498.63px;font-size:17px;line-height:19.55px;color:#424242;font-weight:400;letter-spacing:0.230px;">Male</span>
<span class="t" style="left:912.50px;top:498.63px;font-size:17px;line-height:19.55px;color:#424242;font-weight:400;letter-spacing:0.189px;">Patient</span>
<span class="t" style="left:1208.50px;top:498.63px;font-size:17px;line-height:19.55px;color:#424242;font-weight:400;letter-spacing:0.945px;">848448</span>
<span class="t" style="left:1620.50px;top:498.63px;font-size:17px;line-height:19.55px;color:#424242;font-weight:400;letter-spacing:0.738px;">1/3/2024</span>
<div style="left:1612px;top:528px;width:162px;height:40px;background:#fafafa;"></div>
<span class="t" style="left:176.50px;top:538.63px;font-size:17px;line-height:19.55px;color:#424242;font-weight:400;letter-spacing:0.945px;">101510</span>
<span class="t" style="left:268.00px;top:538.63px;font-size:17px;line-height:19.55px;color:#424242;font-weight:400;letter-spacing:0.196px;">Basil khan</span>
<span class="t" style="left:506.00px;top:538.63px;font-size:17px;line-height:19.55px;color:#424242;font-weight:400;letter-spacing:0.230px;">Male</span>
<span class="t" style="left:912.50px;top:538.63px;font-size:17px;line-height:19.55px;color:#424242;font-weight:400;letter-spacing:0.189px;">Patient</span>
<span class="t" style="left:1208.50px;top:538.63px;font-size:17px;line-height:19.55px;color:#424242;font-weight:400;letter-spacing:0.945px;">923435353</span>
<span class="t" style="left:1362.00px;top:538.63px;font-size:17px;line-height:19.55px;color:#424242;font-weight:400;letter-spacing:0.301px;">Testinsurance@gmail.com</span>
<span class="t" style="left:1620.50px;top:538.63px;font-size:17px;line-height:19.55px;color:#424242;font-weight:400;letter-spacing:0.738px;">1/3/2024</span>
<div style="left:168px;top:568px;width:1695px;height:40px;background:#f6f6f6;"></div>
<div style="left:1612px;top:568px;width:162px;height:40px;background:#efefef;"></div>
<span class="t" style="left:176.50px;top:578.63px;font-size:17px;line-height:19.55px;color:#424242;font-weight:400;letter-spacing:0.945px;">201509</span>
<span class="t" style="left:268.00px;top:578.63px;font-size:17px;line-height:19.55px;color:#424242;font-weight:400;letter-spacing:0.291px;">Khurram Aziz</span>
<span class="t" style="left:506.00px;top:578.63px;font-size:17px;line-height:19.55px;color:#424242;font-weight:400;letter-spacing:0.230px;">Male</span>
<span class="t" style="left:912.50px;top:578.63px;font-size:17px;line-height:19.55px;color:#424242;font-weight:400;letter-spacing:0.189px;">Patient</span>
<span class="t" style="left:1208.50px;top:578.63px;font-size:17px;line-height:19.55px;color:#424242;font-weight:400;letter-spacing:0.945px;">03002933123</span>
<span class="t" style="left:1620.50px;top:578.63px;font-size:17px;line-height:19.55px;color:#424242;font-weight:400;letter-spacing:0.738px;">1/3/2024</span>
<div style="left:1612px;top:608px;width:162px;height:40px;background:#fafafa;"></div>
<span class="t" style="left:176.50px;top:618.63px;font-size:17px;line-height:19.55px;color:#424242;font-weight:400;letter-spacing:0.945px;">101508</span>
<span class="t" style="left:268.00px;top:618.63px;font-size:17px;line-height:19.55px;color:#424242;font-weight:400;letter-spacing:0.233px;">Jameela ahmad</span>
<span class="t" style="left:506.00px;top:618.63px;font-size:17px;line-height:19.55px;color:#424242;font-weight:400;letter-spacing:0.236px;">Female</span>
<span class="t" style="left:912.50px;top:618.63px;font-size:17px;line-height:19.55px;color:#424242;font-weight:400;letter-spacing:0.189px;">Patient</span>
<span class="t" style="left:1208.50px;top:618.63px;font-size:17px;line-height:19.55px;color:#424242;font-weight:400;letter-spacing:0.945px;">7847878</span>
<span class="t" style="left:1620.50px;top:618.63px;font-size:17px;line-height:19.55px;color:#424242;font-weight:400;letter-spacing:0.738px;">1/3/2024</span>
<div style="left:168px;top:648px;width:1695px;height:40px;background:#f6f6f6;"></div>
<div style="left:1612px;top:648px;width:162px;height:40px;background:#efefef;"></div>
<span class="t" style="left:176.50px;top:658.63px;font-size:17px;line-height:19.55px;color:#424242;font-weight:400;letter-spacing:0.945px;">101507</span>
<span class="t" style="left:268.00px;top:658.63px;font-size:17px;line-height:19.55px;color:#424242;font-weight:400;letter-spacing:0.222px;">Rabia</span>
<span class="t" style="left:506.00px;top:658.63px;font-size:17px;line-height:19.55px;color:#424242;font-weight:400;letter-spacing:0.236px;">Female</span>
<span class="t" style="left:912.50px;top:658.63px;font-size:17px;line-height:19.55px;color:#424242;font-weight:400;letter-spacing:0.189px;">Patient</span>
<span class="t" style="left:1208.50px;top:658.63px;font-size:17px;line-height:19.55px;color:#424242;font-weight:400;letter-spacing:0.945px;">84787</span>
<span class="t" style="left:1620.50px;top:658.63px;font-size:17px;line-height:19.55px;color:#424242;font-weight:400;letter-spacing:0.738px;">1/3/2024</span>
<div style="left:1612px;top:688px;width:162px;height:40px;background:#fafafa;"></div>
<span class="t" style="left:176.50px;top:698.63px;font-size:17px;line-height:19.55px;color:#424242;font-weight:400;letter-spacing:0.945px;">201506</span>
<span class="t" style="left:268.00px;top:698.63px;font-size:17px;line-height:19.55px;color:#424242;font-weight:400;letter-spacing:0.208px;">Sarim Riyaz</span>
<span class="t" style="left:506.00px;top:698.63px;font-size:17px;line-height:19.55px;color:#424242;font-weight:400;letter-spacing:0.230px;">Male</span>
<span class="t" style="left:912.50px;top:698.63px;font-size:17px;line-height:19.55px;color:#424242;font-weight:400;letter-spacing:0.189px;">Patient</span>
<span class="t" style="left:1208.50px;top:698.63px;font-size:17px;line-height:19.55px;color:#424242;font-weight:400;letter-spacing:0.945px;">922423423</span>
<span class="t" style="left:1362.00px;top:698.63px;font-size:17px;line-height:19.55px;color:#424242;font-weight:400;letter-spacing:0.232px;">Sarim@gamail.com</span>
<span class="t" style="left:1620.50px;top:698.63px;font-size:17px;line-height:19.55px;color:#424242;font-weight:400;letter-spacing:0.738px;">1/2/2024</span>
<div style="left:168px;top:728px;width:1695px;height:40px;background:#f6f6f6;"></div>
<div style="left:1612px;top:728px;width:162px;height:40px;background:#efefef;"></div>
<span class="t" style="left:176.50px;top:738.63px;font-size:17px;line-height:19.55px;color:#424242;font-weight:400;letter-spacing:0.945px;">201505</span>
<span class="t" style="left:268.00px;top:738.63px;font-size:17px;line-height:19.55px;color:#424242;font-weight:400;letter-spacing:0.229px;">Rabi ahmad</span>
<span class="t" style="left:506.00px;top:738.63px;font-size:17px;line-height:19.55px;color:#424242;font-weight:400;letter-spacing:0.236px;">Female</span>
<span class="t" style="left:912.50px;top:738.63px;font-size:17px;line-height:19.55px;color:#424242;font-weight:400;letter-spacing:0.189px;">Patient</span>
<span class="t" style="left:1208.50px;top:738.63px;font-size:17px;line-height:19.55px;color:#424242;font-weight:400;letter-spacing:0.945px;">448948</span>
<span class="t" style="left:1620.50px;top:738.63px;font-size:17px;line-height:19.55px;color:#424242;font-weight:400;letter-spacing:0.738px;">1/1/2024</span>
<div style="left:1612px;top:768px;width:162px;height:40px;background:#fafafa;"></div>
<span class="t" style="left:176.50px;top:778.63px;font-size:17px;line-height:19.55px;color:#424242;font-weight:400;letter-spacing:0.945px;">101504</span>
<span class="t" style="left:268.00px;top:778.63px;font-size:17px;line-height:19.55px;color:#424242;font-weight:400;letter-spacing:0.259px;">Waniya ali</span>
<span class="t" style="left:506.00px;top:778.63px;font-size:17px;line-height:19.55px;color:#424242;font-weight:400;letter-spacing:0.236px;">Female</span>
<span class="t" style="left:912.50px;top:778.63px;font-size:17px;line-height:19.55px;color:#424242;font-weight:400;letter-spacing:0.189px;">Patient</span>
<span class="t" style="left:1208.50px;top:778.63px;font-size:17px;line-height:19.55px;color:#424242;font-weight:400;letter-spacing:0.945px;">3948984</span>
<span class="t" style="left:1620.50px;top:778.63px;font-size:17px;line-height:19.55px;color:#424242;font-weight:400;letter-spacing:0.738px;">1/1/2024</span>
<span class="t" style="left:180.30px;top:825.03px;font-size:17px;line-height:19.55px;color:#424242;font-weight:400;letter-spacing:0.444px;">Showing 1 to 10 of 1,505 entries</span>
<div style="left:1462px;top:821px;width:41px;height:38px;background:#45467a;border-radius:3px;"></div>
<span class="t" style="left:1386.00px;top:829.98px;font-size:15px;line-height:17.25px;color:#6c757d;font-weight:400;letter-spacing:-0.170px;">Previous</span>
<span class="t" style="left:1478.33px;top:829.98px;font-size:15px;line-height:17.25px;color:#fff;font-weight:400;letter-spacing:0.000px;">1</span>
<span class="t" style="left:1521.33px;top:829.98px;font-size:15px;line-height:17.25px;color:#333;font-weight:400;letter-spacing:0.000px;">2</span>
<span class="t" style="left:1564.83px;top:829.98px;font-size:15px;line-height:17.25px;color:#333;font-weight:400;letter-spacing:0.000px;">3</span>
<span class="t" style="left:1608.33px;top:829.98px;font-size:15px;line-height:17.25px;color:#333;font-weight:400;letter-spacing:0.000px;">4</span>
<span class="t" style="left:1651.33px;top:829.98px;font-size:15px;line-height:17.25px;color:#333;font-weight:400;letter-spacing:0.000px;">5</span>
<span class="t" style="left:1692.74px;top:829.98px;font-size:15px;line-height:17.25px;color:#333;font-weight:400;letter-spacing:0.000px;">...</span>
<span class="t" style="left:1742.48px;top:829.98px;font-size:15px;line-height:17.25px;color:#333;font-weight:400;letter-spacing:0.000px;">151</span>
<div style="left:1775px;top:822px;width:96px;height:46px;background:#003f8a;border-radius:23px 8px 23px 23px;"></div>
<svg style="left:1784px;top:833px" width="24" height="24"><circle cx="11.7" cy="11.7" r="9.3" fill="none" stroke="#fff" stroke-width="1.8"/><path d="M8.8 9.3 Q8.8 6.2 11.8 6.2 Q14.8 6.2 14.8 9 Q14.8 10.8 12.8 11.8 Q11.8 12.3 11.8 14" fill="none" stroke="#fff" stroke-width="1.8" stroke-linecap="round"/><circle cx="11.8" cy="17" r="1.1" fill="#fff"/></svg>
<span class="t" style="left:1814.50px;top:834.91px;font-size:18px;line-height:20.70px;color:#fff;font-weight:700;letter-spacing:-0.629px;">Help</span>
</body></html>
